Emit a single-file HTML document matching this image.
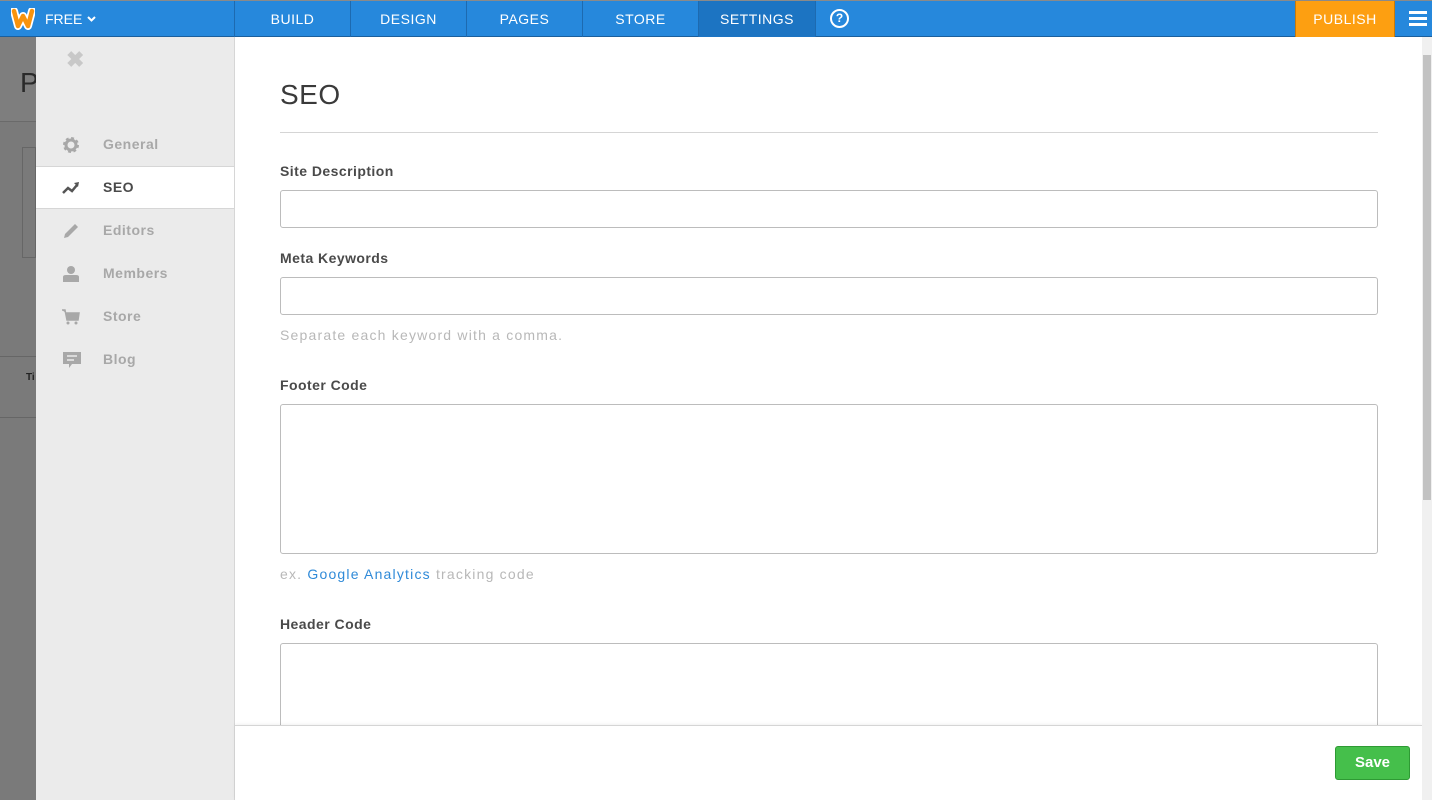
<!DOCTYPE html>
<html><head><style>
*{margin:0;padding:0;box-sizing:border-box}
body{width:1432px;height:800px;overflow:hidden;position:relative;font-family:"Liberation Sans",sans-serif;background:#7b7b7b}
.top{position:absolute;left:0;top:0;width:1432px;height:37px;background:#2688dc;border-top:1px solid #8a8a8a;border-bottom:1px solid #1b5f9c}
.tab{position:absolute;top:0;height:36px;line-height:36px;color:#fff;font-size:14px;text-align:center;border-left:1px solid #1d6ab0;letter-spacing:.5px}
.lbg{position:absolute;left:0;top:37px;width:36px;height:763px;background:#7a7a7a}
.side{position:absolute;left:36px;top:37px;width:199px;height:763px;background:#ebebeb;border-right:1px solid #d6d6d6}
.item{position:absolute;left:0;width:198px;height:43px;line-height:43px;font-size:14px;font-weight:bold;color:#a8a8a8;padding-left:67px;letter-spacing:.5px}
.item svg{position:absolute;left:26px;top:13px}
.main{position:absolute;left:235px;top:37px;width:1187px;height:763px;background:#fff}
.sb{position:absolute;left:1422px;top:37px;width:10px;height:763px;background:#f0f0f0}
.lab{position:absolute;left:45px;font-size:14px;font-weight:bold;color:#4a4a4a;letter-spacing:.45px}
.inp{position:absolute;left:45px;width:1098px;border:1px solid #bcbcbc;border-radius:3px;background:#fff}
.hint{position:absolute;left:45px;font-size:14px;color:#b8b8b8;letter-spacing:1.2px}
</style></head><body>
<div class="lbg">
<div style="position:absolute;left:0;top:0;width:36px;height:85px;background:#7e7e7e;border-bottom:1px solid #6a6a6a"></div>
<div style="position:absolute;left:20px;top:30px;font-size:28px;color:#2a2a2a">P</div>
<div style="position:absolute;left:22px;top:110px;width:14px;height:111px;border:1px solid #666"></div>
<div style="position:absolute;left:0;top:319px;width:36px;border-top:1px solid #666"></div>
<div style="position:absolute;left:26px;top:335px;font-size:10px;font-weight:bold;color:#222">Ti</div>
<div style="position:absolute;left:0;top:380px;width:36px;border-top:1px solid #666"></div>
</div>
<div class="top">
<svg style="position:absolute;left:11px;top:7px" width="24" height="22" viewBox="0 0 24 22"><path d="M3 3 L7 18 L12 8 L17 18 L21 3" fill="none" stroke="#fff" stroke-width="8" stroke-linejoin="round" stroke-linecap="round"/><path d="M3 3 L7 18 L12 8 L17 18 L21 3" fill="none" stroke="#f7930e" stroke-width="4.5" stroke-linejoin="round" stroke-linecap="round"/></svg>
<div style="position:absolute;left:45px;top:0;line-height:36px;color:#fff;font-size:14px">FREE</div>
<svg style="position:absolute;left:87px;top:15px" width="9" height="6" viewBox="0 0 9 6"><path d="M1 1 L4.5 4.5 L8 1" fill="none" stroke="#fff" stroke-width="2"/></svg>
<div class="tab" style="left:234px;width:116px">BUILD</div>
<div class="tab" style="left:350px;width:116px">DESIGN</div>
<div class="tab" style="left:466px;width:116px">PAGES</div>
<div class="tab" style="left:582px;width:116px">STORE</div>
<div class="tab" style="left:698px;width:117px;background:#1c74c2">SETTINGS</div>
<div class="tab" style="left:815px;width:480px"></div>
<div style="position:absolute;left:830px;top:8px;width:19px;height:19px;border:2px solid #fff;border-radius:50%;color:#fff;font-size:12px;font-weight:bold;text-align:center;line-height:15px">?</div>
<div style="position:absolute;left:1295px;top:0;width:100px;height:36px;background:#fd9f11;border-left:1px solid #c77a0a;border-right:1px solid #c77a0a;color:#fff;font-size:14px;line-height:36px;text-align:center;letter-spacing:.5px">PUBLISH</div>
<div style="position:absolute;left:1409px;top:10px;width:18px;height:3px;background:#fff;box-shadow:0 6px 0 #fff,0 12px 0 #fff"></div>
</div>
<div class="side">
<div style="position:absolute;left:30px;top:10px;font-size:22px;color:#c8c8c8;font-weight:bold">&#10006;</div>
<div class="item" style="top:86px"><svg width="18" height="18" viewBox="0 0 18 18"><circle cx="9" cy="9" r="6" fill="none" stroke="#a8a8a8" stroke-width="4" stroke-dasharray="2.5 2.2"/><circle cx="9" cy="9" r="5" fill="none" stroke="#a8a8a8" stroke-width="3"/></svg>General</div>
<div class="item" style="top:129px;background:#fff;border-top:1px solid #d6d6d6;border-bottom:1px solid #d6d6d6;color:#4a4a4a;line-height:41px"><svg width="18" height="16" viewBox="0 0 18 16"><path d="M1 13 L6 8 L10 11 L15 5" fill="none" stroke="#555" stroke-width="2.5"/><path d="M12 3 L17 2 L16 7Z" fill="#555"/></svg>SEO</div>
<div class="item" style="top:172px"><svg width="18" height="18" viewBox="0 0 18 18"><path d="M2 16 L3 12 L13 2 L16 5 L6 15Z" fill="#a8a8a8"/></svg>Editors</div>
<div class="item" style="top:215px"><svg width="18" height="18" viewBox="0 0 18 18"><circle cx="9" cy="5" r="4" fill="#a8a8a8"/><path d="M1 17 V12 Q1 10 4 10 H14 Q17 10 17 12 V17Z" fill="#a8a8a8"/></svg>Members</div>
<div class="item" style="top:258px"><svg width="18" height="18" viewBox="0 0 18 18"><path d="M0 2 H3 L5 12 H16 L17 5 H4" fill="#a8a8a8" stroke="#a8a8a8" stroke-width="1.5"/><circle cx="6" cy="15" r="1.5" fill="#a8a8a8"/><circle cx="14" cy="15" r="1.5" fill="#a8a8a8"/></svg>Store</div>
<div class="item" style="top:301px"><svg width="20" height="18" viewBox="0 0 20 18"><path d="M1 1 H19 V13 H10 L7 17 V13 H1Z" fill="#a8a8a8"/><path d="M5 5 H15 M5 9 H12" stroke="#ebebeb" stroke-width="1.5"/></svg>Blog</div>
</div>
<div class="main">
<div style="position:absolute;left:45px;top:42px;font-size:28px;color:#3a3a3a;letter-spacing:.5px">SEO</div>
<div style="position:absolute;left:45px;top:95px;width:1098px;border-top:1px solid #d5d5d5"></div>
<div class="lab" style="top:126px">Site Description</div>
<div class="inp" style="top:153px;height:38px"></div>
<div class="lab" style="top:213px">Meta Keywords</div>
<div class="inp" style="top:240px;height:38px"></div>
<div class="hint" style="top:290px">Separate each keyword with a comma.</div>
<div class="lab" style="top:340px">Footer Code</div>
<div class="inp" style="top:367px;height:150px"></div>
<div class="hint" style="top:529px">ex. <span style="color:#2f8ad8">Google Analytics</span> tracking code</div>
<div class="lab" style="top:579px">Header Code</div>
<div class="inp" style="top:606px;height:120px"></div>
<div style="position:absolute;left:0;top:688px;width:1187px;height:75px;background:#fff;border-top:1px solid #d5d5d5;box-shadow:0 -1px 3px rgba(0,0,0,.06)"></div>
<div style="position:absolute;left:1100px;top:709px;width:75px;height:34px;background:#45bf4b;border:1px solid #2e9a34;border-radius:3px;color:#fff;font-weight:bold;font-size:15px;text-align:center;line-height:32px">Save</div>
</div>
<div class="sb"><div style="position:absolute;left:1px;top:18px;width:8px;height:445px;background:#c2c2c2"></div></div>
</body></html>
